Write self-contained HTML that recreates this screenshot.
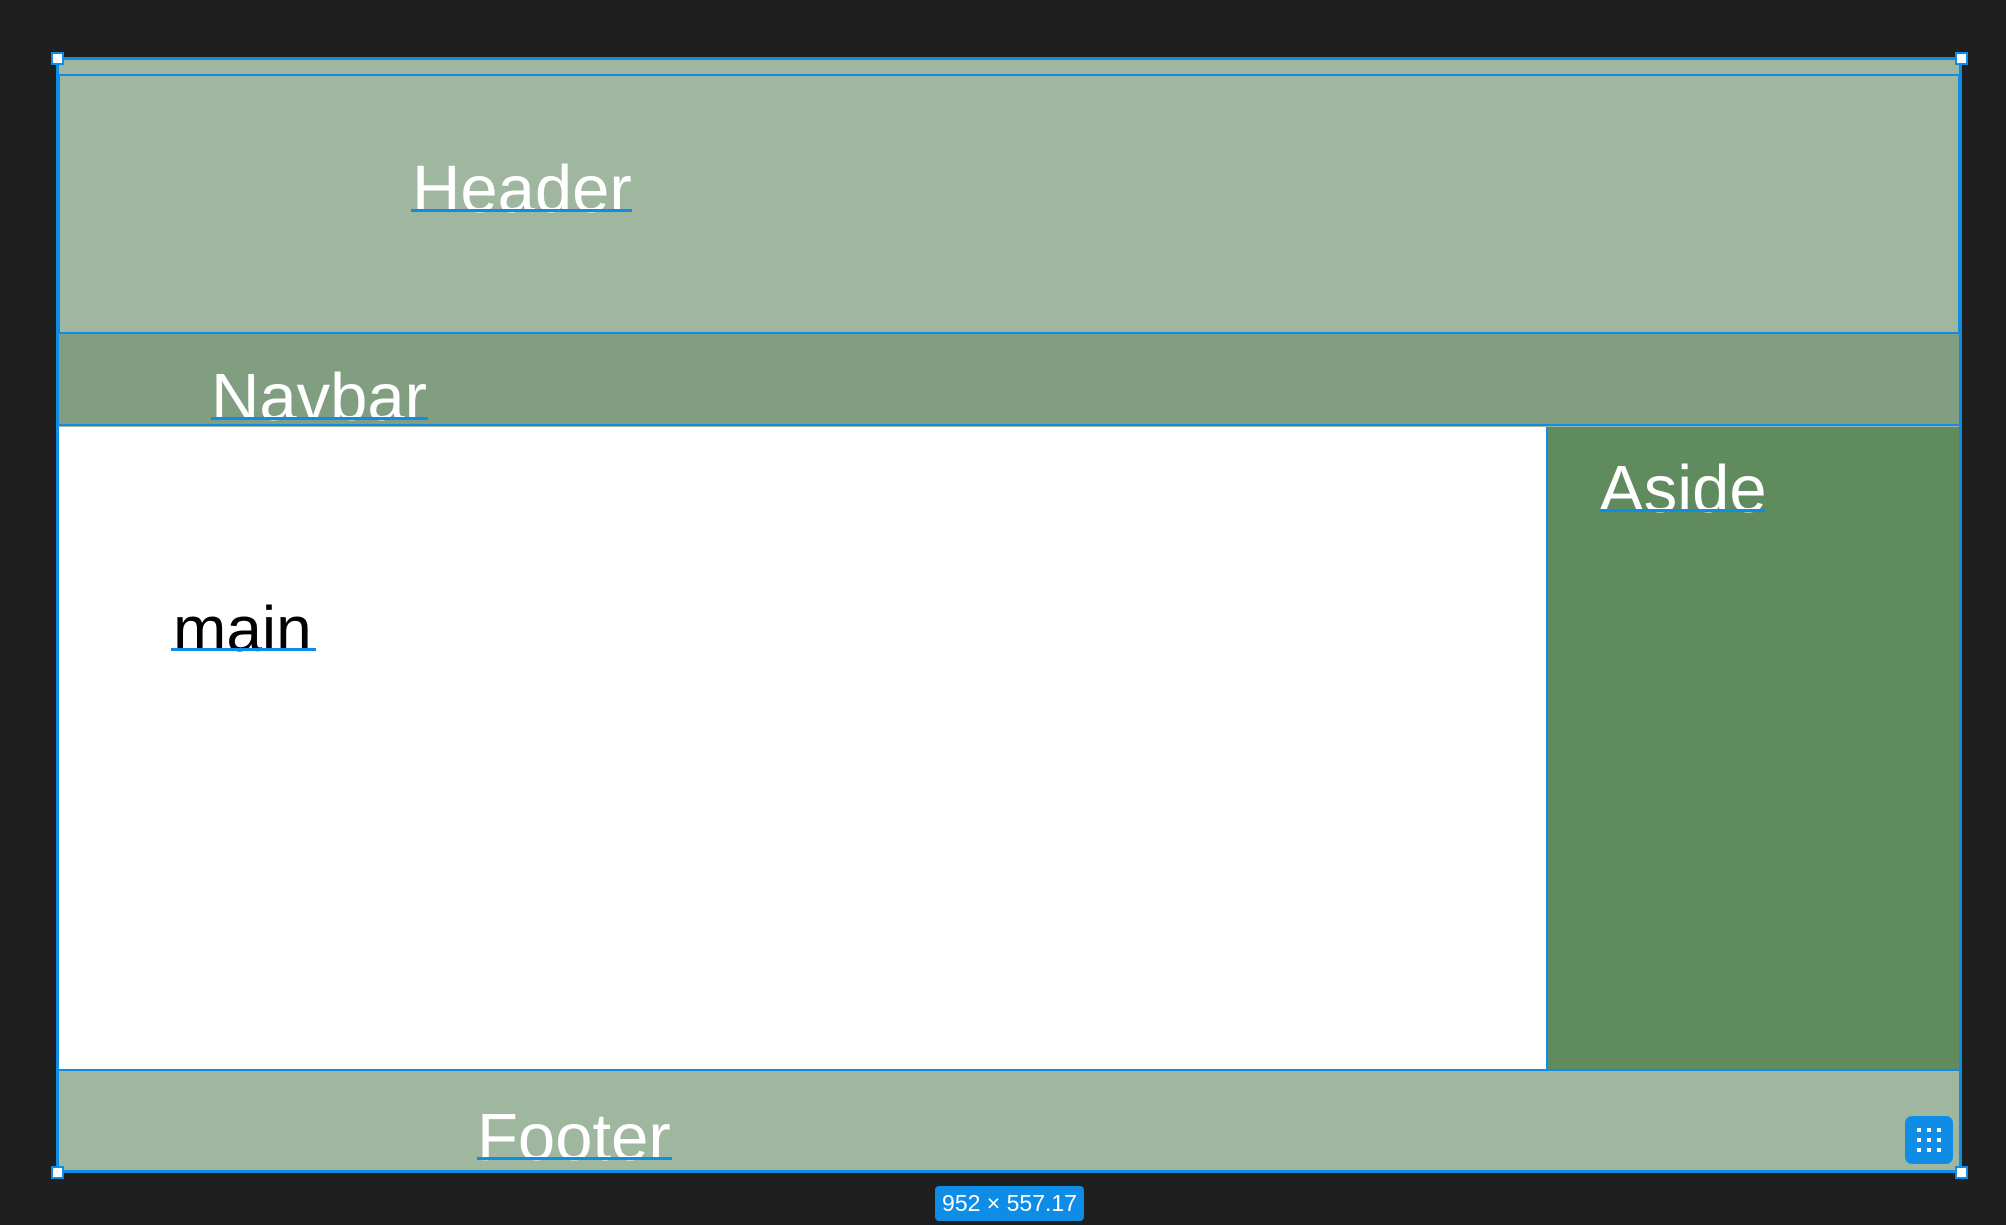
<!DOCTYPE html>
<html><head><meta charset="utf-8"><style>
*{margin:0;padding:0;box-sizing:border-box}
html,body{width:2006px;height:1225px;background:#1f1f1f;overflow:hidden;font-family:"Liberation Sans",sans-serif}
.a{position:absolute}
.t{position:absolute;font-size:67px;line-height:67px;color:#fff;white-space:nowrap}
.u{position:absolute;height:3px;background:#0f8ce6}
.h{position:absolute;width:13px;height:13px;background:#fff;border:2px solid #0f8ce6}
</style></head><body>
<div class="a" style="left:57px;top:57px;width:1905px;height:1116px;background:#9fb79f"></div>
<div class="a" style="left:58px;top:74px;width:1902px;height:258px;border:2px solid #0f8ce6;border-bottom:none;background:#9fb79f"></div>
<div class="a" style="left:58px;top:332px;width:1902px;height:94px;background:#819e80;border-top:2px solid #0f8ce6;border-bottom:2px solid #0f8ce6"></div>
<div class="a" style="left:58px;top:427px;width:1488px;height:643px;background:#fff"></div>
<div class="a" style="left:1546px;top:427px;width:414px;height:643px;background:#608b5e;border-left:2px solid #0f8ce6"></div>
<div class="a" style="left:58px;top:1069px;width:1902px;height:103px;background:#9fb79f;border-top:2px solid #0f8ce6"></div>
<div class="a" style="left:56px;top:57px;width:1906px;height:1116px;border:3px solid #0f8ce6"></div>
<div class="h" style="left:51px;top:52px"></div>
<div class="h" style="left:1955px;top:52px"></div>
<div class="h" style="left:51px;top:1166px"></div>
<div class="h" style="left:1955px;top:1166px"></div>

<div class="t" style="left:412px;top:156px">Header</div><div class="u" style="left:411px;top:209px;width:221px"></div>
<div class="t" style="left:211px;top:364px">Navbar</div><div class="u" style="left:211px;top:417px;width:217px"></div>
<div class="t" style="left:173px;top:599px;color:#000;font-size:64px;line-height:60px">main</div><div class="u" style="left:171px;top:648px;width:145px"></div>
<div class="t" style="left:1599px;top:456px">Aside</div><div class="u" style="left:1599px;top:509px;width:166px"></div>
<div class="t" style="left:477px;top:1104px">Footer</div><div class="u" style="left:477px;top:1157px;width:195px"></div>

<div class="a" style="left:1905px;top:1116px;width:48px;height:48px;background:#0f8ce6;border-radius:7px">
<svg width="48" height="48"><g fill="#fff">
<rect x="12" y="12" width="4" height="4"/><rect x="22" y="12" width="4" height="4"/><rect x="32" y="12" width="4" height="4"/>
<rect x="12" y="22" width="4" height="4"/><rect x="22" y="22" width="4" height="4"/><rect x="32" y="22" width="4" height="4"/>
<rect x="12" y="32" width="4" height="4"/><rect x="22" y="32" width="4" height="4"/><rect x="32" y="32" width="4" height="4"/>
</g></svg></div>

<div class="a" style="left:935px;top:1186px;width:149px;height:35px;background:#0f8ce6;border-radius:4px;color:#fff;font-size:23px;line-height:35px;text-align:center">952 × 557.17</div>
</body></html>
